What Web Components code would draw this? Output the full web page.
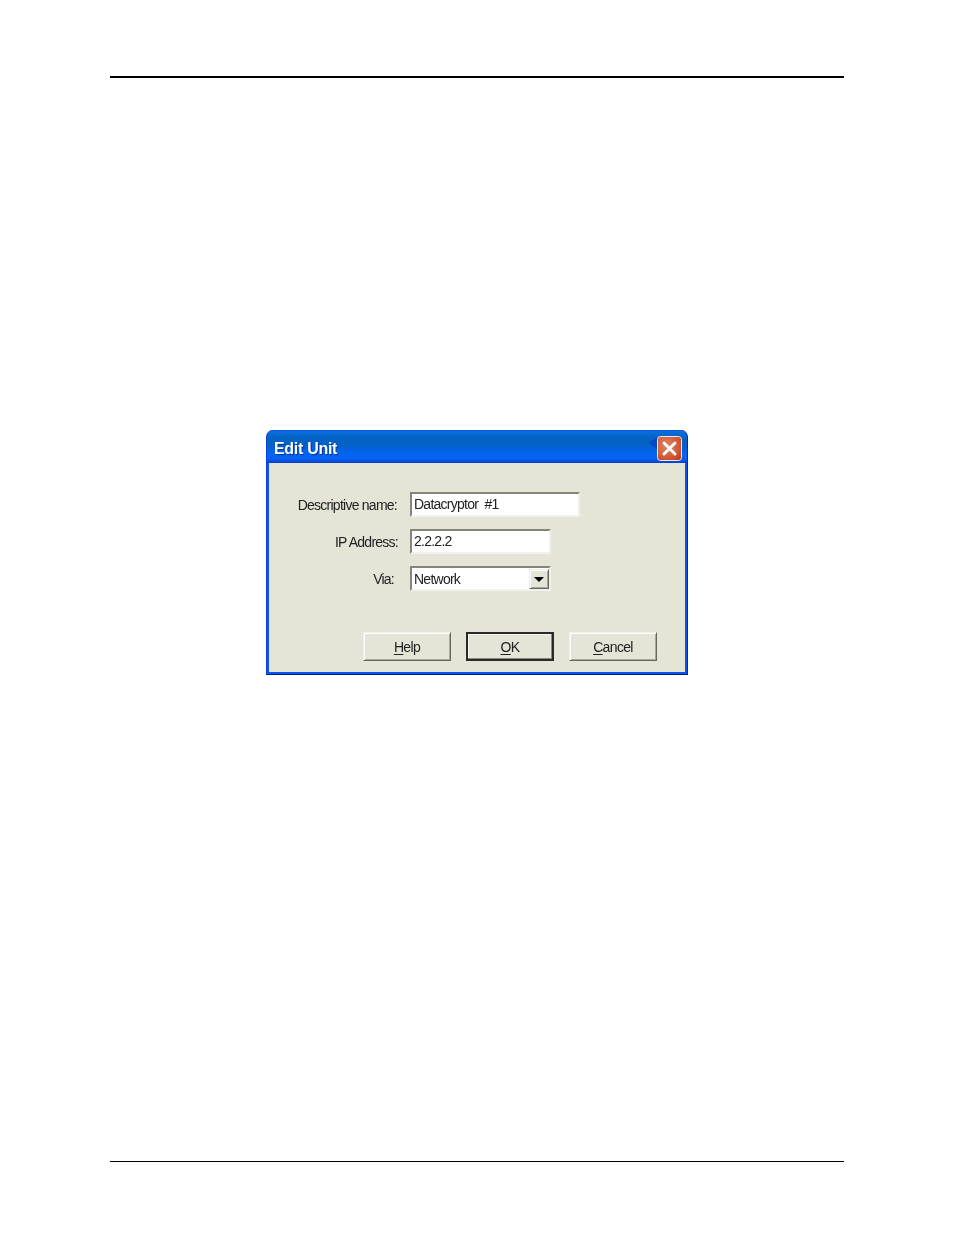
<!DOCTYPE html>
<html>
<head>
<meta charset="utf-8">
<title>Edit Unit</title>
<style>
  html, body { margin: 0; padding: 0; background: #fff; }
</style>
</head>
<body>
<doc-page>
  <xp-dialog heading="Edit Unit">
    <form-row label="Descriptive name:" gap="1">
      <text-box width="170">Datacryptor&nbsp; #1</text-box>
    </form-row>
    <form-row label="IP Address:" gap="0">
      <text-box width="141">2.2.2.2</text-box>
    </form-row>
    <form-row label="Via:" gap="4">
      <combo-box width="141">Network</combo-box>
    </form-row>
    <xp-button slot="buttons" key="H" rest="elp"></xp-button>
    <xp-button slot="buttons" key="O" rest="K" default></xp-button>
    <xp-button slot="buttons" key="C" rest="ancel"></xp-button>
  </xp-dialog>
</doc-page>

<script>
const UI_FONT = `"Liberation Sans", Arial, sans-serif`;

class DocPage extends HTMLElement {
  constructor() {
    super();
    this.attachShadow({ mode: "open" });
    this.shadowRoot.innerHTML = `
      <style>
        :host { display: block; width: 954px; height: 1235px; padding: 76px 110px 0; box-sizing: border-box; background: #fff; }
        .top { height: 2px; background: #000; }
        .body { height: 1083px; padding-top: 352px; box-sizing: border-box; display: flex; justify-content: center; align-items: flex-start; }
        .bottom { height: 1px; background: #000; }
      </style>
      <div class="top"></div>
      <div class="body"><slot></slot></div>
      <div class="bottom"></div>
    `;
  }
}

class XpDialog extends HTMLElement {
  constructor() {
    super();
    this.attachShadow({ mode: "open" });
    this.shadowRoot.innerHTML = `
      <style>
        :host {
          width: 422px; height: 245px; box-sizing: border-box;
          border-radius: 7px 7px 0 0; overflow: hidden;
          background: #0a55ea;
          border-style: solid; border-width: 0 1px 1px 1px;
          border-color: #0a40d4 #002a9c #001c8c #0a40d4;
          display: flex; flex-direction: column;
          font-family: ${UI_FONT};
        }
        .title {
          height: 33px; flex: none; box-sizing: border-box; padding: 6px 5px 0 7px;
          display: flex; align-items: flex-start; gap: 0;
          background: linear-gradient(180deg, #0a58dc 0, #0a6cdc 2px, #0568cc 5px, #0462c2 9px, #0462c4 15px, #0460dc 18px, #0466f0 24px, #0660f2 29px, #0a50e0 31px, #0440c8 33px);
        }
        .title span {
          flex: 1; color: #fff; font: bold 16px/26px ${UI_FONT}; letter-spacing: -.3px;
          text-shadow: 1px 1px 1px #0a2f90; filter: blur(.35px);
        }
        .notch { width: 8px; height: 25px; display: block; }
        .close { width: 25px; height: 25px; display: block; filter: blur(.3px); }
        .client {
          flex: 1; margin: 0 2px 2px 2px; background: #e5e5d7;
          padding: 29px 0 0 0; display: flex; flex-direction: column; gap: 12px;
          box-sizing: border-box; filter: blur(.35px);
        }
        .buttons { display: flex; gap: 15px; margin-top: 29px; padding-left: 94px; }
      </style>
      <div class="title">
        <span id="h"></span>
        <svg class="notch" viewBox="0 0 8 25"><path d="M0 7 8 1V13Z" fill="#0446c4"/></svg>
        <svg class="close" viewBox="0 0 25 25">
          <defs>
            <radialGradient id="r" cx=".38" cy=".38" r=".85">
              <stop offset="0" stop-color="#dc8466"/>
              <stop offset=".6" stop-color="#d25a36"/>
              <stop offset="1" stop-color="#b8360e"/>
            </radialGradient>
          </defs>
          <rect x=".5" y=".5" width="24" height="24" rx="3" fill="url(#r)" stroke="#e8eaf2" stroke-width="1"/>
          <path d="M7 7 18 18 M18 7 7 18" stroke="#fff" stroke-width="2.9" stroke-linecap="round" fill="none"/>
        </svg>
      </div>
      <div class="client">
        <slot></slot>
        <div class="buttons"><slot name="buttons"></slot></div>
      </div>
    `;
  }
  connectedCallback() {
    this.shadowRoot.querySelector("#h").textContent = this.getAttribute("heading");
  }
}

class FormRow extends HTMLElement {
  constructor() {
    super();
    this.attachShadow({ mode: "open" });
    this.shadowRoot.innerHTML = `
      <style>
        :host { display: flex; height: 25px; align-items: center; font: 14px ${UI_FONT}; color: #222; }
        .label { width: 129px; text-align: right; box-sizing: border-box; letter-spacing: -.75px; white-space: nowrap; }
        .field { margin-left: 12px; }
      </style>
      <div class="label" id="l"></div>
      <div class="field"><slot></slot></div>
    `;
  }
  connectedCallback() {
    const l = this.shadowRoot.querySelector("#l");
    l.textContent = this.getAttribute("label");
    l.style.paddingRight = this.getAttribute("gap") + "px";
  }
}

const FIELD_CSS = `
  :host { display: block; box-sizing: border-box; height: 25px; background: #fff;
    border-style: solid; border-width: 2px;
    border-color: #85857a #f0f0e8 #f2f2ec #85857a;
    font: 14px/20px ${UI_FONT}; color: #222; letter-spacing: -.75px; white-space: nowrap; }
`;

class TextBox extends HTMLElement {
  constructor() {
    super();
    this.attachShadow({ mode: "open" });
    this.shadowRoot.innerHTML = `
      <style>${FIELD_CSS} .t { padding-left: 2px; display: block; }</style>
      <span class="t"><slot></slot></span>
    `;
  }
  connectedCallback() { this.style.width = this.getAttribute("width") + "px"; }
}

class ComboBox extends HTMLElement {
  constructor() {
    super();
    this.attachShadow({ mode: "open" });
    this.shadowRoot.innerHTML = `
      <style>${FIELD_CSS}
        .wrap { display: flex; justify-content: space-between; height: 100%; }
        .t { padding-left: 2px; padding-top: 1px; }
        .arrow { width: 20px; height: 20px; margin-top: 1px; box-sizing: border-box; background: #e5e5d7;
          border: 1px solid; border-color: #ecece2 #66665c #66665c #ecece2;
          box-shadow: inset 1px 1px 0 #fff, inset -1px -1px 0 #a8a89a;
          display: flex; align-items: center; justify-content: center; }
        .arrow i { display: block; width: 0; height: 0; margin-top: 1px; border-style: solid; border-color: #000 transparent transparent; border-width: 5px 5px 0; }
      </style>
      <div class="wrap">
        <span class="t"><slot></slot></span>
        <span class="arrow"><i></i></span>
      </div>
    `;
  }
  connectedCallback() { this.style.width = this.getAttribute("width") + "px"; }
}

class XpButton extends HTMLElement {
  constructor() {
    super();
    this.attachShadow({ mode: "open" });
    this.shadowRoot.innerHTML = `
      <style>
        :host { display: flex; align-items: center; justify-content: center; box-sizing: border-box;
          width: 88px; height: 29px; background: #e5e5d7;
          border: 1px solid; border-color: #f0f0e6 #66665c #66665c #f0f0e6;
          box-shadow: inset 1px 1px 0 #fff, inset -1px -1px 0 #a8a89a;
          font: 14px ${UI_FONT}; color: #222; letter-spacing: -.65px; }
        :host([default]) { border: 2px solid #2a2a28; box-shadow: inset -1px -1px 0 #8a8a7e, inset 1px 1px 0 #f6f6f0; }
        u { text-underline-offset: 2px; }
      </style>
      <span><u id="k"></u><span id="r"></span></span>
    `;
  }
  connectedCallback() {
    this.shadowRoot.querySelector("#k").textContent = this.getAttribute("key");
    this.shadowRoot.querySelector("#r").textContent = this.getAttribute("rest");
  }
}

customElements.define("doc-page", DocPage);
customElements.define("xp-dialog", XpDialog);
customElements.define("form-row", FormRow);
customElements.define("text-box", TextBox);
customElements.define("combo-box", ComboBox);
customElements.define("xp-button", XpButton);
</script>
</body>
</html>
